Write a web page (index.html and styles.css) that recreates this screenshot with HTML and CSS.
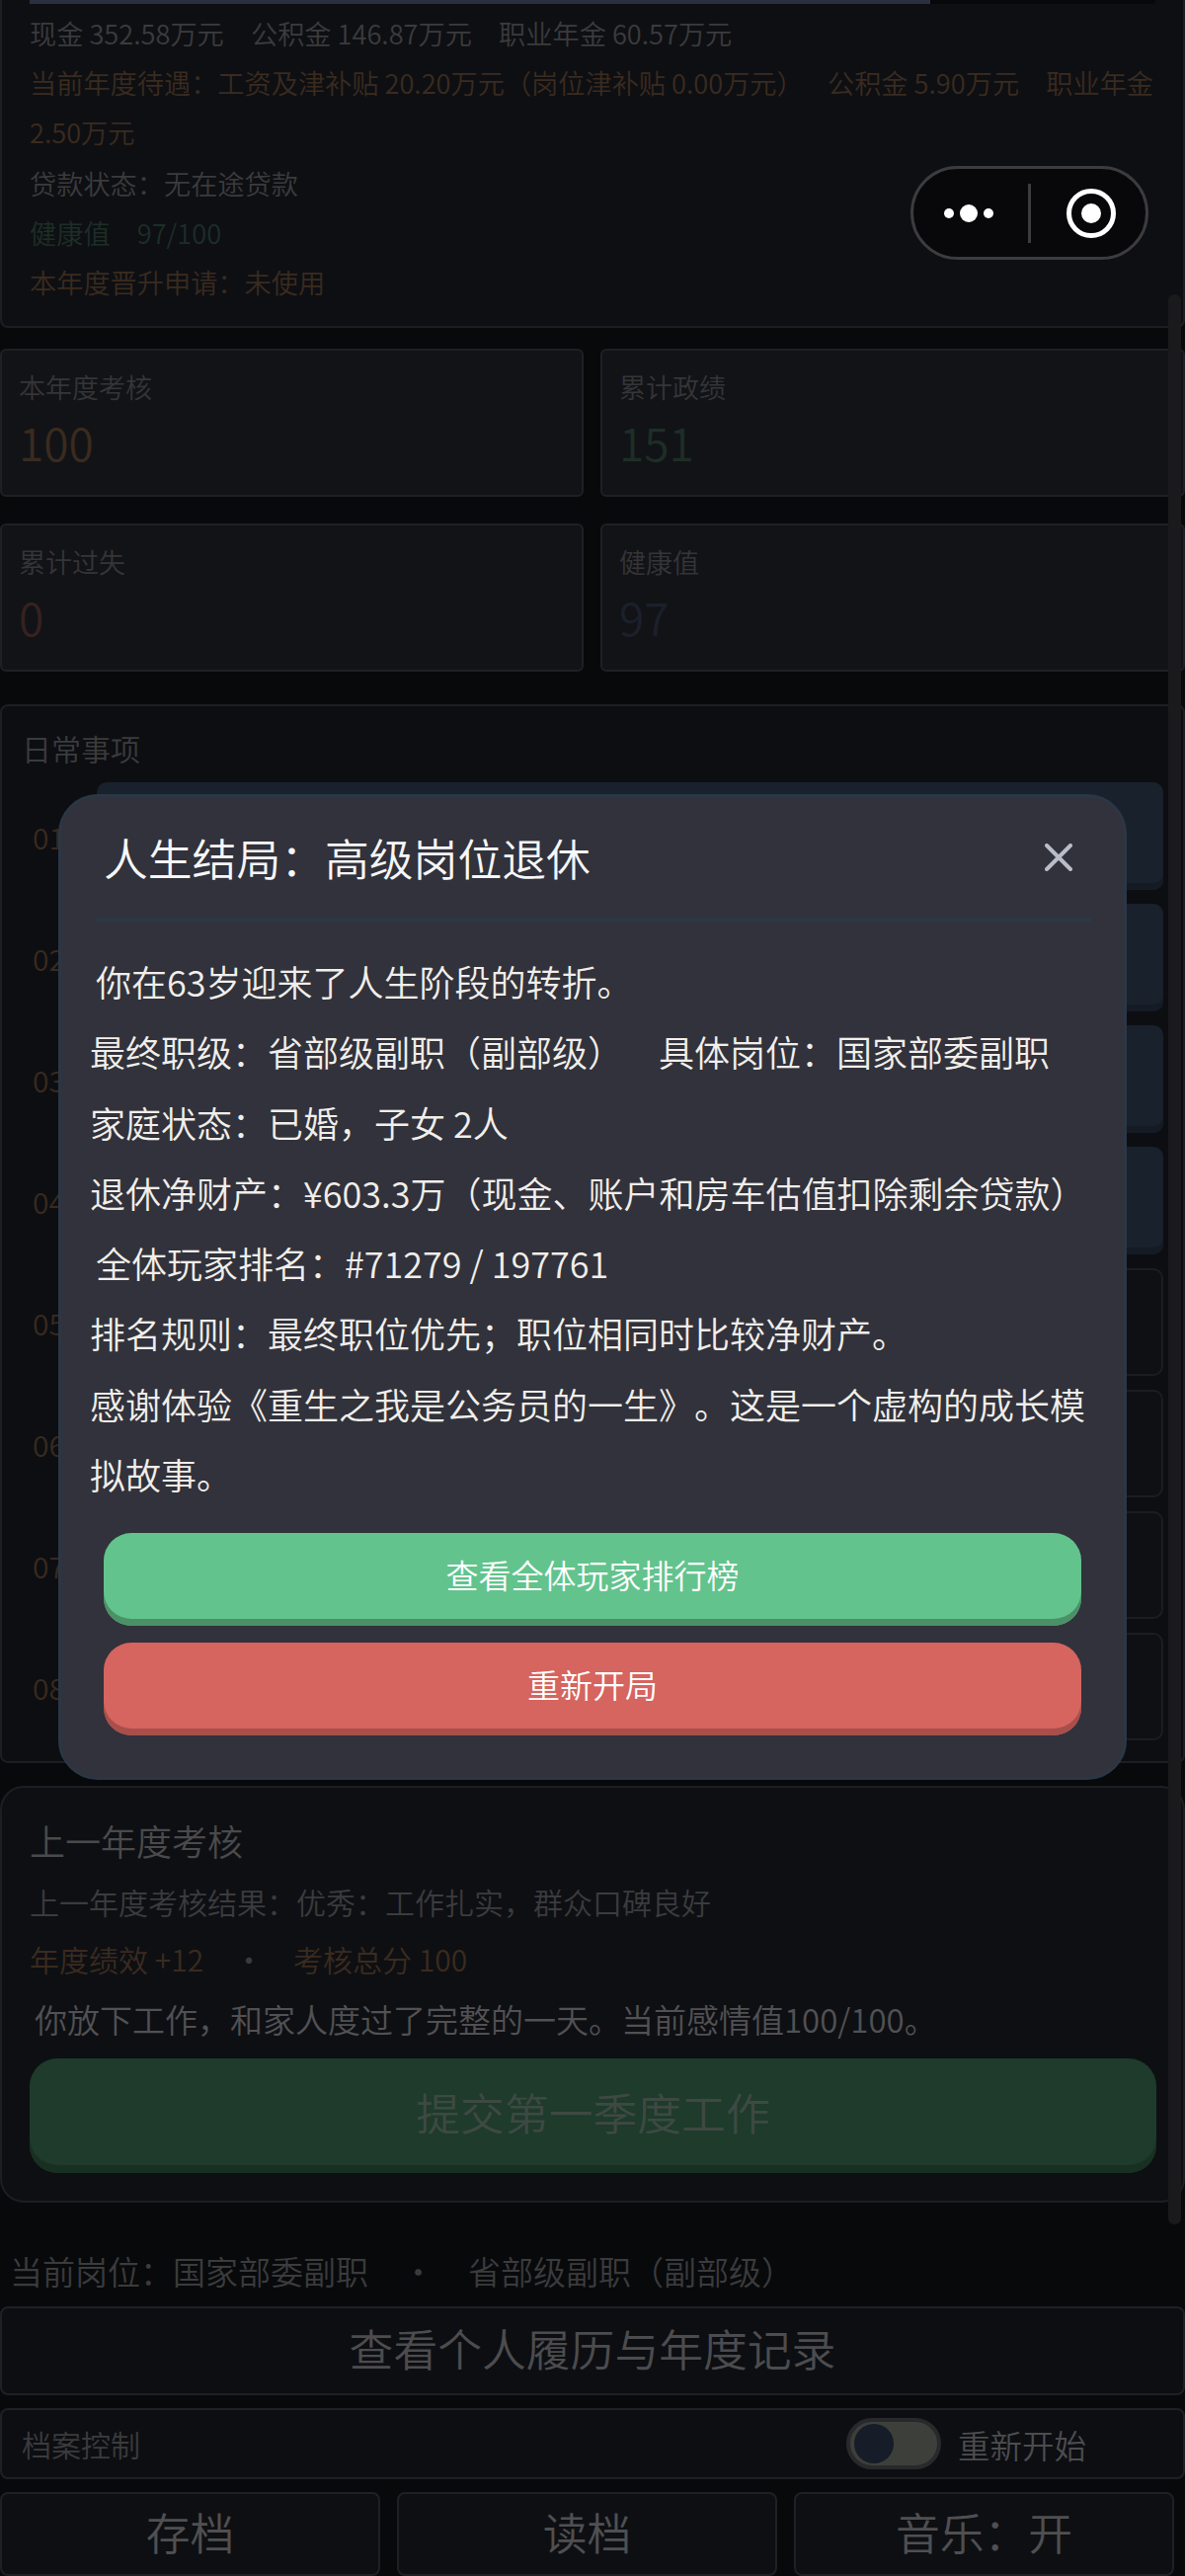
FILE: index.html
```html
<!DOCTYPE html>
<html>
<head>
  <title>人生结局</title>
  <link rel="stylesheet" href="styles.css">
</head>
<body>
  <div class="page">
    <div class="card summary">
      <div class="progress"><div class="progress-fill"></div></div>
      <p class="line">现金 352.58万元<span class="gap"></span>公积金 146.87万元<span class="gap"></span>职业年金 60.57万元</p>
      <p class="line brown wrapped">当前年度待遇：工资及津补贴 20.20万元（岗位津补贴 0.00万元）&nbsp;&nbsp;&nbsp;&nbsp;公积金 5.90万元<span class="gap"></span>职业年金 2.50万元</p>
      <p class="line">贷款状态：无在途贷款</p>
      <p class="line green">健康值<span class="gap"></span>97/100</p>
      <p class="line brown">本年度晋升申请：未使用</p>
    </div>

    <div class="stats">
      <div class="stat">
        <div class="stat-label">本年度考核</div>
        <div class="stat-value brown">100</div>
      </div>
      <div class="stat">
        <div class="stat-label">累计政绩</div>
        <div class="stat-value green">151</div>
      </div>
      <div class="stat">
        <div class="stat-label">累计过失</div>
        <div class="stat-value red">0</div>
      </div>
      <div class="stat">
        <div class="stat-label">健康值</div>
        <div class="stat-value blue">97</div>
      </div>
    </div>

    <div class="card daily">
      <div class="daily-title">日常事项</div>
      <div class="task"><span class="task-num">01</span><div class="task-box done"></div></div>
      <div class="task"><span class="task-num">02</span><div class="task-box done"></div></div>
      <div class="task"><span class="task-num">03</span><div class="task-box done"></div></div>
      <div class="task"><span class="task-num">04</span><div class="task-box done"></div></div>
      <div class="task"><span class="task-num">05</span><div class="task-box"></div></div>
      <div class="task"><span class="task-num">06</span><div class="task-box"></div></div>
      <div class="task"><span class="task-num">07</span><div class="task-box"></div></div>
      <div class="task"><span class="task-num">08</span><div class="task-box"></div></div>
    </div>

    <div class="card review">
      <h2 class="review-title">上一年度考核</h2>
      <p class="review-line">上一年度考核结果：优秀：工作扎实，群众口碑良好</p>
      <p class="review-line brown">年度绩效 +12<span class="dot">•</span>考核总分 100</p>
      <p class="review-note">你放下工作，和家人度过了完整的一天。当前感情值100/100。</p>
      <button class="submit">提交第一季度工作</button>
    </div>

    <div class="position">当前岗位：国家部委副职<span class="dot">•</span>省部级副职（副部级）</div>
    <button class="wide-btn">查看个人履历与年度记录</button>

    <div class="archive">
      <span class="archive-label">档案控制</span>
      <div class="restart">
        <span class="toggle"><span class="knob"></span></span>
        <span class="restart-text">重新开始</span>
      </div>
    </div>

    <div class="actions">
      <button class="action-btn">存档</button>
      <button class="action-btn">读档</button>
      <button class="action-btn">音乐：开</button>
    </div>
  </div>

  <div class="scrollbar"></div>

  <div class="capsule">
    <svg class="capsule-more" width="60" height="20" viewBox="0 0 60 20">
      <circle cx="10" cy="10" r="5" fill="#fff"/>
      <circle cx="30" cy="10" r="9" fill="#fff"/>
      <circle cx="50" cy="10" r="5" fill="#fff"/>
    </svg>
    <span class="capsule-line"></span>
    <svg class="capsule-close" width="52" height="52" viewBox="0 0 52 52">
      <circle cx="26" cy="26" r="22.5" fill="none" stroke="#fff" stroke-width="5"/>
      <circle cx="26" cy="26" r="10" fill="#fff"/>
    </svg>
  </div>

  <div class="modal">
    <div class="modal-head">
      <h1 class="modal-title">人生结局：高级岗位退休</h1>
      <svg class="modal-close" width="28" height="28" viewBox="0 0 28 28">
        <path d="M2 2 L26 26 M26 2 L2 26" stroke="#b9bdc9" stroke-width="4" stroke-linecap="round"/>
      </svg>
    </div>
    <div class="modal-divider"></div>
    <div class="modal-body">
      <p class="indent">你在63岁迎来了人生阶段的转折。</p>
      <p>最终职级：省部级副职（副部级）<span class="gap"></span>具体岗位：国家部委副职</p>
      <p>家庭状态：已婚，子女 2人</p>
      <p>退休净财产：¥603.3万（现金、账户和房车估值扣除剩余贷款）</p>
      <p class="indent">全体玩家排名：#71279 / 197761</p>
      <p>排名规则：最终职位优先；职位相同时比较净财产。</p>
      <p>感谢体验《重生之我是公务员的一生》。这是一个虚构的成长模拟故事。</p>
    </div>
    <button class="modal-btn green-btn">查看全体玩家排行榜</button>
    <button class="modal-btn red-btn">重新开局</button>
  </div>
</body>
</html>
```

FILE: styles.css
```css
* {
  box-sizing: border-box;
}

html,
body {
  margin: 0;
  height: 2608px;
  overflow: hidden;
  background-color: #08090b;
  font-family: "Noto Sans CJK SC", "Noto Sans", sans-serif;
  font-weight: 350;
  text-spacing-trim: space-all;
  color: #3b3b3d;
}

body {
  position: relative;
}

p,
h1,
h2 {
  margin: 0;
  font-weight: 350;
}

button {
  display: block;
  font-family: inherit;
  font-weight: 350;
  border: none;
  padding: 0;
}

.gap {
  display: inline-block;
  width: 1em;
}

.brown {
  color: #3a2b1f;
}

.green {
  color: #1d2e26;
}

.red {
  color: #36221f;
}

.blue {
  color: #1b202b;
}

.card {
  background-color: #0e0f13;
  border: 2px solid #1d1e22;
}

/* Top summary */
.summary {
  height: 332px;
  padding: 0 28px;
  border-top: none;
  border-radius: 0 0 8px 8px;
}

.progress {
  height: 4px;
  background-color: #08080a;
  border-radius: 0 0 4px 4px;
  margin-bottom: 4px;
}

.progress-fill {
  width: 80%;
  height: 100%;
  background-color: #2a3041;
}

.line {
  font-size: 27.2px;
  line-height: 50px;
}

.line.wrapped {
  margin-bottom: 2px;
}

/* Stats */
.stats {
  display: grid;
  grid-template-columns: 591px 592px;
  grid-auto-rows: 150px;
  column-gap: 17px;
  row-gap: 27px;
  margin-top: 21px;
}

.stat {
  background-color: #121317;
  border: 2px solid #1f2024;
  border-radius: 6px;
  padding: 17px 17px 0;
}

.stat-label {
  font-size: 27px;
  line-height: 40px;
  color: #353537;
}

.stat-value {
  font-size: 46px;
  line-height: 66px;
  margin-top: 2px;
}

/* Daily tasks */
.daily {
  height: 1072px;
  margin-top: 33px;
  padding: 0 20px 0 20px;
  border-radius: 8px;
  background-color: #0d0e12;
}

.daily-title {
  font-size: 30px;
  line-height: 44px;
  margin-top: 20px;
  margin-bottom: 13px;
  color: #3b3b3d;
}

.task {
  display: flex;
  align-items: center;
  height: 109px;
  margin-bottom: 14px;
}

.task-num {
  width: 76px;
  padding-left: 11px;
  font-size: 30px;
  color: #382a1e;
}

.task-box {
  flex: 1;
  height: 100%;
  background-color: #0f1014;
  border: 2px solid #1c1d21;
  border-radius: 10px;
}

.task-box.done {
  background-color: #19212c;
  border: none;
  box-shadow: inset 0 -7px 0 #151b25;
}

/* Last year review */
.review {
  height: 422px;
  margin-top: 23px;
  padding: 28px 28px 0;
  border-radius: 24px;
}

.review-title {
  font-size: 36px;
  line-height: 50px;
  color: #4a4a4c;
}

.review-line {
  font-size: 30px;
  line-height: 58px;
  margin-top: 8px;
  color: #3b3b3d;
}

.review-line + .review-line {
  margin-top: 0;
}

.review-line.brown {
  color: #3a2b1f;
}

.dot {
  margin: 0 30px 0 31px;
  color: #3b3b3d;
}

.review-note {
  font-size: 33px;
  line-height: 60px;
  margin-top: 2px;
  padding-left: 5px;
  color: #515153;
}

.submit {
  width: 1141px;
  height: 116px;
  margin-top: 10px;
  padding-bottom: 9px;
  font-size: 44.8px;
  background-color: #1e3b2b;
  color: #3e4943;
  border-radius: 28px;
  box-shadow: inset 0 -8px 0 #183022;
}

/* Bottom area */
.position {
  margin-top: 44px;
  padding-left: 10px;
  font-size: 33px;
  line-height: 50px;
  color: #3b3b3d;
}

.position .dot {
  margin: 0 34px;
}

.wide-btn {
  width: 100%;
  height: 90px;
  margin-top: 11px;
  padding-bottom: 7px;
  font-size: 44.8px;
  color: #4c4c4e;
  background-color: #0d0e12;
  border: 2px solid #1f2024;
  border-radius: 8px;
}

.archive {
  display: flex;
  justify-content: space-between;
  align-items: center;
  height: 72px;
  margin-top: 13px;
  padding: 0 98px 0 20px;
  background-color: #0d0e12;
  border: 2px solid #1f2024;
  border-radius: 8px;
}

.archive-label {
  font-size: 30px;
  color: #3b3b3d;
}

.restart {
  display: flex;
  align-items: center;
  gap: 17px;
}

.toggle {
  display: flex;
  align-items: center;
  width: 96px;
  height: 52px;
  padding-left: 5px;
  background-color: #3d3f3a;
  border: 4px solid #29292d;
  border-radius: 26px;
}

.knob {
  width: 40px;
  height: 40px;
  margin-left: -1px;
  background-color: #161c28;
  border-radius: 50%;
}

.restart-text {
  font-size: 32.5px;
  color: #4c4c4e;
}

.actions {
  display: grid;
  grid-template-columns: repeat(3, 385px);
  column-gap: 17px;
  margin-top: 13px;
}

.action-btn {
  height: 85px;
  padding-bottom: 7px;
  font-size: 44.8px;
  color: #4f4f51;
  background-color: #0e0f13;
  border: 2px solid #1f2024;
  border-radius: 8px;
}

/* Things on top of the page */
.scrollbar {
  position: absolute;
  left: 1183px;
  top: 298px;
  width: 13px;
  height: 1954px;
  background-color: #1a1a1c;
  border-radius: 6px;
}

.capsule {
  position: absolute;
  left: 922px;
  top: 168px;
  width: 241px;
  height: 95px;
  display: flex;
  align-items: center;
  background-color: #08080a;
  border: 3px solid #3c3c3e;
  border-radius: 48px;
}

.capsule-more {
  margin-left: 26px;
}

.capsule-line {
  width: 3px;
  height: 60px;
  margin-left: 30px;
  background-color: #3c3c3e;
}

.capsule-close {
  margin-left: 35px;
}

.modal {
  position: absolute;
  left: 59px;
  top: 804px;
  width: 1082px;
  height: 998px;
  background-color: #31323b;
  border: 3px solid #2c3745;
  border-radius: 40px;
}

.modal-head {
  display: flex;
  justify-content: space-between;
  align-items: center;
  height: 120px;
  padding: 0 52px 0 43px;
}

.modal-title {
  font-size: 44.8px;
  color: #f6f6f8;
}

.modal-close {
  margin-top: 2px;
}

.modal-divider {
  height: 5px;
  margin: 2px 33px 0 34px;
  background-color: #2e3744;
}

.modal-body {
  margin-top: 24px;
  padding: 0 28px 0 29px;
  font-size: 36px;
  line-height: 71.3px;
  color: #f1eeea;
}

.indent {
  padding-left: 6px;
}

.modal-btn {
  width: 990px;
  height: 94px;
  margin: 0 0 17px 43px;
  padding-bottom: 10px;
  font-size: 33px;
  color: #fff;
  border-radius: 28px;
}

.green-btn {
  margin-top: 24px;
  background-color: #62c38d;
  box-shadow: inset 0 -7px 0 #4a9168;
}

.red-btn {
  background-color: #d6645f;
  box-shadow: inset 0 -7px 0 #a84f4b;
}
```
